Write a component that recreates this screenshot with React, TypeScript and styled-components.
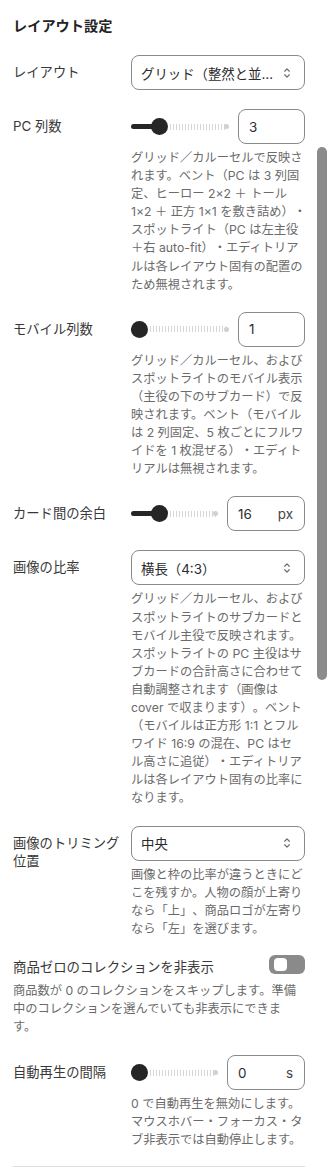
import React from "react";
import styled, { createGlobalStyle } from "styled-components";

const Global = createGlobalStyle`
  html, body { margin: 0; padding: 0; background: #fff; }
  body { font-family: "Inter", "Noto Sans CJK JP", sans-serif; color: #2b2b2b; }
  * { box-sizing: border-box; }
`;

const Page = styled.div`
  position: relative;
  width: 330px;
  height: 1170px;
  overflow: hidden;
  padding: 15px 25px 0 13px;
`;

const Title = styled.h2`
  margin: 0 0 18px;
  font-size: 14.2px;
  line-height: 22px;
  font-weight: 700;
  color: #232323;
`;

const Row = styled.div<{ $mb?: number }>`
  display: grid;
  grid-template-columns: 118px 174px;
  align-items: start;
  margin-bottom: ${(p) => p.$mb ?? 18}px;
`;

const Label = styled.div`
  font-size: 13.3px;
  line-height: 18.3px;
  padding-top: 8px;
  color: #383838;
`;

const Control = styled.div`
  display: flex;
  flex-direction: column;
`;

const HelpText = styled.p<{ $mt?: number }>`
  margin: ${(p) => p.$mt ?? 5}px 0 0;
  font-size: 12.25px;
  line-height: 18.1px;
  color: #6b6b6b;
  white-space: nowrap;
  text-spacing-trim: space-all;
`;

const SelectBox = styled.div`
  height: 35px;
  border: 1px solid #8a8a8a;
  border-radius: 8px;
  display: flex;
  align-items: center;
  padding: 0 10px 0 9px;
  font-size: 13.4px;
  color: #2b2b2b;
  gap: 6px;
`;

const SelectText = styled.span`
  flex: 1;
  white-space: nowrap;
  overflow: hidden;
  text-overflow: ellipsis;
`;

const SliderLine = styled.div`
  display: flex;
  align-items: center;
  gap: 9px;
  height: 35px;
`;

const Track = styled.div`
  position: relative;
  flex: 1;
  height: 17px;
`;

const Active = styled.div`
  position: absolute;
  left: 0;
  top: 6px;
  height: 5px;
  border-radius: 3px;
  background: #262626;
`;

const Inactive = styled.div`
  position: absolute;
  right: 2px;
  top: 5.5px;
  height: 6px;
  background: repeating-linear-gradient(
    90deg,
    #d6d6d6 0px,
    #d6d6d6 1px,
    transparent 1px,
    transparent 3px
  );
`;

const EndDot = styled.div`
  position: absolute;
  right: 0;
  top: 6px;
  width: 5px;
  height: 5px;
  border-radius: 50%;
  background: #d0d0d0;
`;

const Thumb = styled.div`
  position: absolute;
  top: 0;
  width: 17px;
  height: 17px;
  border-radius: 50%;
  background: #262626;
`;

const NumberBox = styled.div<{ $w: number }>`
  width: ${(p) => p.$w}px;
  height: 35px;
  border: 1px solid #8a8a8a;
  border-radius: 8px;
  display: flex;
  align-items: center;
  justify-content: space-between;
  padding: 0 11px 0 10px;
  font-size: 13.4px;
  color: #2b2b2b;
  flex-shrink: 0;
`;

const Unit = styled.span`
  color: #444;
`;

const ToggleRow = styled.div`
  display: flex;
  align-items: flex-start;
  justify-content: space-between;
`;

const ToggleLabel = styled.span`
  font-size: 13.4px;
  line-height: 24px;
  color: #383838;
`;

const Switch = styled.div`
  width: 36px;
  height: 19px;
  border-radius: 6px;
  background: #8a8a8a;
  padding: 3px 0 0 5px;
`;

const Knob = styled.div`
  width: 13px;
  height: 13px;
  border-radius: 4px;
  background: #fff;
`;

const Section = styled.div`
  margin-bottom: 19px;
`;

const Divider = styled.hr`
  border: none;
  border-top: 1px solid #dedede;
  margin: 17px 0 0;
`;

const Scrollbar = styled.div`
  position: absolute;
  left: 317px;
  top: 147px;
  width: 10px;
  height: 533px;
  border-radius: 5px;
  background: #8b8b8b;
`;

const Chevrons = () => (
  <svg width="14" height="14" viewBox="0 0 24 24" fill="none" stroke="#6a6a6a" strokeWidth="2" strokeLinecap="round" strokeLinejoin="round">
    <path d="m8 15 4 4 4-4" />
    <path d="m8 9 4-4 4 4" />
  </svg>
);

const Select = ({ value }: { value: string }) => (
  <SelectBox>
    <SelectText>{value}</SelectText>
    <Chevrons />
  </SelectBox>
);

const Help = ({ lines, mt }: { lines: string[]; mt?: number }) => (
  <HelpText $mt={mt}>
    {lines.map((l, i) => (
      <React.Fragment key={i}>
        {l}
        {i < lines.length - 1 && <br />}
      </React.Fragment>
    ))}
  </HelpText>
);

const Slider = ({ frac, value, unit, w }: { frac: number; value: string; unit?: string; w: number }) => (
  <SliderLine>
    <Track>
      <Active style={{ width: `calc(${frac} * (100% - 17px) + 8px)` }} />
      <Inactive style={{ left: `calc(${frac} * (100% - 17px) + 19px)` }} />
      <EndDot />
      <Thumb style={{ left: `calc(${frac} * (100% - 17px))` }} />
    </Track>
    <NumberBox $w={w}>
      <span>{value}</span>
      {unit && <Unit>{unit}</Unit>}
    </NumberBox>
  </SliderLine>
);

export default function App() {
  return (
    <>
      <Global />
      <Page>
        <Title>レイアウト設定</Title>

        <Row $mb={19}>
          <Label>レイアウト</Label>
          <Control>
            <Select value="グリッド（整然と並べる）" />
          </Control>
        </Row>

        <Row>
          <Label>PC 列数</Label>
          <Control>
            <Slider frac={0.25} value="3" w={67} />
            <Help
              lines={[
                "グリッド／カルーセルで反映さ",
                "れます。ベント（PC は 3 列固",
                "定、ヒーロー 2×2 ＋ トール",
                "1×2 ＋ 正方 1×1 を敷き詰め）・",
                "スポットライト（PC は左主役",
                "＋右 auto-fit）・エディトリア",
                "ルは各レイアウト固有の配置の",
                "ため無視されます。",
              ]}
            />
          </Control>
        </Row>

        <Row>
          <Label>モバイル列数</Label>
          <Control>
            <Slider frac={0} value="1" w={67} />
            <Help
              lines={[
                "グリッド／カルーセル、および",
                "スポットライトのモバイル表示",
                "（主役の下のサブカード）で反",
                "映されます。ベント（モバイル",
                "は 2 列固定、5 枚ごとにフルワ",
                "イドを 1 枚混ぜる）・エディト",
                "リアルは無視されます。",
              ]}
            />
          </Control>
        </Row>

        <Row $mb={19}>
          <Label>カード間の余白</Label>
          <Control>
            <Slider frac={0.29} value="16" unit="px" w={78} />
          </Control>
        </Row>

        <Row>
          <Label>画像の比率</Label>
          <Control>
            <Select value="横長（4:3）" />
            <Help
              lines={[
                "グリッド／カルーセル、および",
                "スポットライトのサブカードと",
                "モバイル主役で反映されます。",
                "スポットライトの PC 主役はサ",
                "ブカードの合計高さに合わせて",
                "自動調整されます（画像は",
                "cover で収まります）。ベント",
                "（モバイルは正方形 1:1 とフル",
                "ワイド 16:9 の混在、PC はセ",
                "ル高さに追従）・エディトリア",
                "ルは各レイアウト固有の比率に",
                "なります。",
              ]}
            />
          </Control>
        </Row>

        <Row $mb={17}>
          <Label>画像のトリミング位置</Label>
          <Control>
            <Select value="中央" />
            <Help
              lines={[
                "画像と枠の比率が違うときにど",
                "こを残すか。人物の顔が上寄り",
                "なら「上」、商品ロゴが左寄り",
                "なら「左」を選びます。",
              ]}
            />
          </Control>
        </Row>

        <Section>
          <ToggleRow>
            <ToggleLabel>商品ゼロのコレクションを非表示</ToggleLabel>
            <Switch>
              <Knob />
            </Switch>
          </ToggleRow>
          <Help
            mt={3}
            lines={[
              "商品数が 0 のコレクションをスキップします。準備",
              "中のコレクションを選んでいても非表示にできま",
              "す。",
            ]}
          />
        </Section>

        <Row $mb={0}>
          <Label>自動再生の間隔</Label>
          <Control>
            <Slider frac={0} value="0" unit="s" w={78} />
            <Help
              lines={[
                "0 で自動再生を無効にします。",
                "マウスホバー・フォーカス・タ",
                "ブ非表示では自動停止します。",
              ]}
            />
          </Control>
        </Row>
        <Divider />

        <Scrollbar />
      </Page>
    </>
  );
}
